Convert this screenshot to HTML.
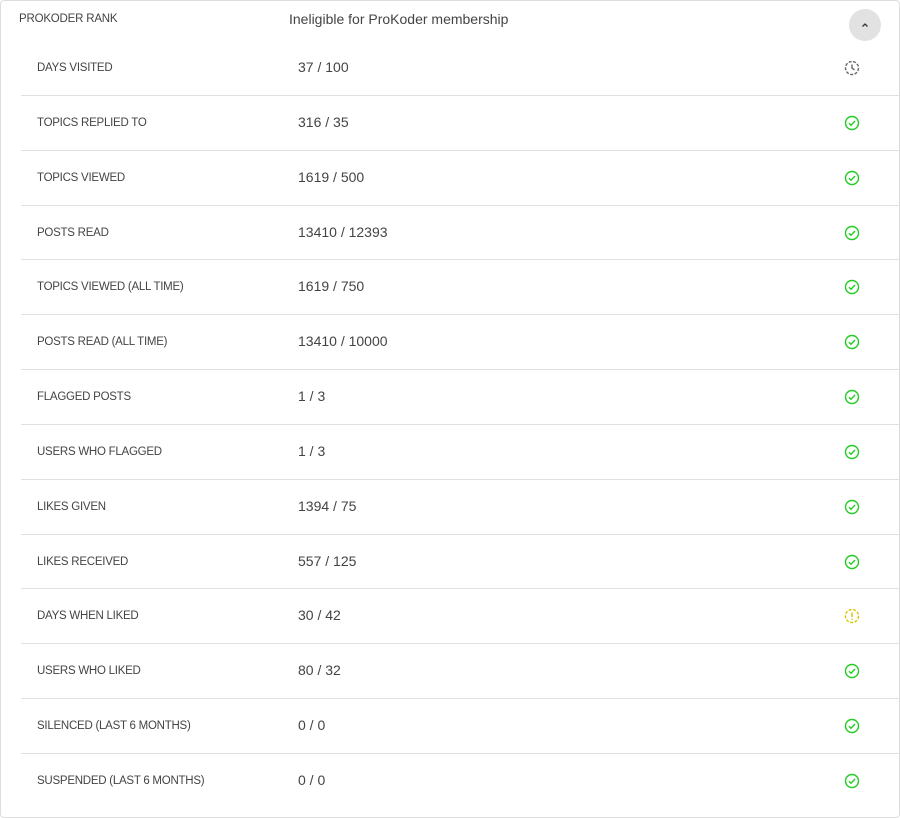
<!DOCTYPE html>
<html><head><style>
body{margin:0;background:#fff;font-family:"Liberation Sans",sans-serif;}
.card{position:absolute;left:0;top:0;width:898px;height:816px;border:1px solid #ddd;border-radius:4px;}
.hl{position:absolute;left:18px;top:12px;font-size:11.5px;color:#444;letter-spacing:-0.2px;}
.hv{position:absolute;left:288px;top:10px;font-size:14px;color:#444;}
.btn{position:absolute;left:848px;top:8px;width:32px;height:32px;border-radius:50%;background:#e2e2e2;}
.btn svg{position:absolute;left:11px;top:11px;}
.rows{position:absolute;left:20px;top:40px;right:0;}
.row{position:relative;height:53.85px;border-bottom:1px solid #e0e0e0;}
.row:last-child{border-bottom:none;}
.l{position:absolute;left:16px;top:21px;font-size:11.5px;color:#444;letter-spacing:-0.25px;}
.v{position:absolute;left:277px;top:18px;font-size:14px;color:#444;}
.i{position:absolute;left:823px;top:19px;}
</style></head><body>
<div class="card">
<div class="hl">PROKODER RANK</div>
<div class="hv">Ineligible for ProKoder membership</div>
<div class="btn"><svg width="10" height="10" viewBox="0 0 10 10"><path d="M2.5 6.5L5 4l2.5 2.5" fill="none" stroke="#333" stroke-width="1.3"/></svg></div>
<div class="rows">
<div class="row"><div class="l">DAYS VISITED</div><div class="v">37 / 100</div><svg class="i" width="16" height="16" viewBox="0 0 16 16"><circle cx="8" cy="8" r="6.5" fill="none" stroke="#666" stroke-width="1.4" stroke-dasharray="3 1.5"/><path d="M8 4.5V8l2.5 2" fill="none" stroke="#666" stroke-width="1.4"/></svg></div>
<div class="row"><div class="l">TOPICS REPLIED TO</div><div class="v">316 / 35</div><svg class="i" width="16" height="16" viewBox="0 0 16 16"><circle cx="8" cy="8" r="6.5" fill="none" stroke="#2c2" stroke-width="1.4"/><path d="M5 8.2l2 2 4-4.2" fill="none" stroke="#2c2" stroke-width="1.4"/></svg></div>
<div class="row"><div class="l">TOPICS VIEWED</div><div class="v">1619 / 500</div><svg class="i" width="16" height="16" viewBox="0 0 16 16"><circle cx="8" cy="8" r="6.5" fill="none" stroke="#2c2" stroke-width="1.4"/><path d="M5 8.2l2 2 4-4.2" fill="none" stroke="#2c2" stroke-width="1.4"/></svg></div>
<div class="row"><div class="l">POSTS READ</div><div class="v">13410 / 12393</div><svg class="i" width="16" height="16" viewBox="0 0 16 16"><circle cx="8" cy="8" r="6.5" fill="none" stroke="#2c2" stroke-width="1.4"/><path d="M5 8.2l2 2 4-4.2" fill="none" stroke="#2c2" stroke-width="1.4"/></svg></div>
<div class="row"><div class="l">TOPICS VIEWED (ALL TIME)</div><div class="v">1619 / 750</div><svg class="i" width="16" height="16" viewBox="0 0 16 16"><circle cx="8" cy="8" r="6.5" fill="none" stroke="#2c2" stroke-width="1.4"/><path d="M5 8.2l2 2 4-4.2" fill="none" stroke="#2c2" stroke-width="1.4"/></svg></div>
<div class="row"><div class="l">POSTS READ (ALL TIME)</div><div class="v">13410 / 10000</div><svg class="i" width="16" height="16" viewBox="0 0 16 16"><circle cx="8" cy="8" r="6.5" fill="none" stroke="#2c2" stroke-width="1.4"/><path d="M5 8.2l2 2 4-4.2" fill="none" stroke="#2c2" stroke-width="1.4"/></svg></div>
<div class="row"><div class="l">FLAGGED POSTS</div><div class="v">1 / 3</div><svg class="i" width="16" height="16" viewBox="0 0 16 16"><circle cx="8" cy="8" r="6.5" fill="none" stroke="#2c2" stroke-width="1.4"/><path d="M5 8.2l2 2 4-4.2" fill="none" stroke="#2c2" stroke-width="1.4"/></svg></div>
<div class="row"><div class="l">USERS WHO FLAGGED</div><div class="v">1 / 3</div><svg class="i" width="16" height="16" viewBox="0 0 16 16"><circle cx="8" cy="8" r="6.5" fill="none" stroke="#2c2" stroke-width="1.4"/><path d="M5 8.2l2 2 4-4.2" fill="none" stroke="#2c2" stroke-width="1.4"/></svg></div>
<div class="row"><div class="l">LIKES GIVEN</div><div class="v">1394 / 75</div><svg class="i" width="16" height="16" viewBox="0 0 16 16"><circle cx="8" cy="8" r="6.5" fill="none" stroke="#2c2" stroke-width="1.4"/><path d="M5 8.2l2 2 4-4.2" fill="none" stroke="#2c2" stroke-width="1.4"/></svg></div>
<div class="row"><div class="l">LIKES RECEIVED</div><div class="v">557 / 125</div><svg class="i" width="16" height="16" viewBox="0 0 16 16"><circle cx="8" cy="8" r="6.5" fill="none" stroke="#2c2" stroke-width="1.4"/><path d="M5 8.2l2 2 4-4.2" fill="none" stroke="#2c2" stroke-width="1.4"/></svg></div>
<div class="row"><div class="l">DAYS WHEN LIKED</div><div class="v">30 / 42</div><svg class="i" width="16" height="16" viewBox="0 0 16 16"><circle cx="8" cy="8" r="6.5" fill="none" stroke="#d8c400" stroke-width="1.4" stroke-dasharray="3 1.5"/><path d="M8 4.5V9M8 10.5V11.8" fill="none" stroke="#d8c400" stroke-width="1.4"/></svg></div>
<div class="row"><div class="l">USERS WHO LIKED</div><div class="v">80 / 32</div><svg class="i" width="16" height="16" viewBox="0 0 16 16"><circle cx="8" cy="8" r="6.5" fill="none" stroke="#2c2" stroke-width="1.4"/><path d="M5 8.2l2 2 4-4.2" fill="none" stroke="#2c2" stroke-width="1.4"/></svg></div>
<div class="row"><div class="l">SILENCED (LAST 6 MONTHS)</div><div class="v">0 / 0</div><svg class="i" width="16" height="16" viewBox="0 0 16 16"><circle cx="8" cy="8" r="6.5" fill="none" stroke="#2c2" stroke-width="1.4"/><path d="M5 8.2l2 2 4-4.2" fill="none" stroke="#2c2" stroke-width="1.4"/></svg></div>
<div class="row"><div class="l">SUSPENDED (LAST 6 MONTHS)</div><div class="v">0 / 0</div><svg class="i" width="16" height="16" viewBox="0 0 16 16"><circle cx="8" cy="8" r="6.5" fill="none" stroke="#2c2" stroke-width="1.4"/><path d="M5 8.2l2 2 4-4.2" fill="none" stroke="#2c2" stroke-width="1.4"/></svg></div>
</div>
</div>
</body></html>
